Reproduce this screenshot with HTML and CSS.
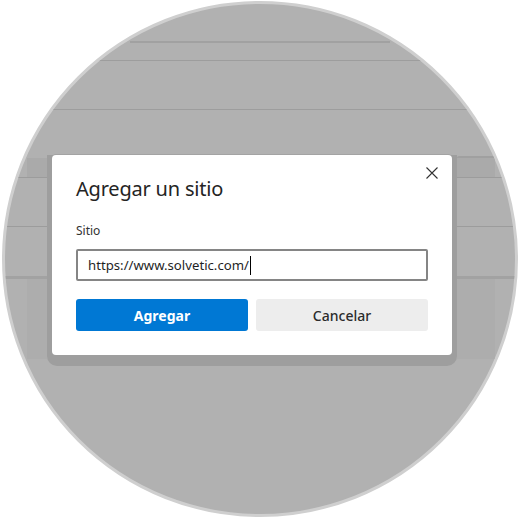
FILE: index.html
```html
<!DOCTYPE html>
<html lang="es">
<head>
<meta charset="utf-8">
<title>Agregar un sitio</title>
<link rel="stylesheet" href="styles.css">
</head>
<body>
<div class="circle">
  <div class="band"></div>
  <div class="rule rule-a"></div>
  <div class="rule rule-b"></div>
  <div class="stage">
    <div class="side side-left">
      <div class="tab"></div>
      <div class="sep"></div>
      <div class="sep sep-mid"></div>
      <div class="sep sep-thick"></div>
      <div class="tab tab-low"></div>
    </div>
    <div class="panel">
      <div class="dialog">
        <button class="close" aria-label="Cerrar">
          <svg width="12" height="12" viewBox="0 0 12 12"><path d="M0.5 0.5 L11.5 11.5 M11.5 0.5 L0.5 11.5" stroke="#333" stroke-width="1.1" fill="none"/></svg>
        </button>
        <h1 class="title">Agregar un sitio</h1>
        <div class="label">Sitio</div>
        <div class="field"><span class="value">https://www.solvetic.com/</span><span class="caret"></span></div>
        <div class="actions">
          <button class="btn btn-primary">Agregar</button>
          <button class="btn btn-secondary">Cancelar</button>
        </div>
      </div>
    </div>
    <div class="side side-right">
      <div class="tab"></div>
      <div class="sep"></div>
      <div class="sep sep-mid"></div>
      <div class="sep sep-thick"></div>
      <div class="tab tab-low"></div>
    </div>
  </div>
</div>
</body>
</html>
```

FILE: styles.css
```css
html, body {
  margin: 0;
  padding: 0;
  background: #ffffff;
}

body {
  width: 520px;
  height: 520px;
  overflow: hidden;
  font-family: "Noto Sans", "Open Sans", sans-serif;
}

.circle {
  margin: 1px 0 0 2px;
  width: 510px;
  height: 510px;
  border: 3px solid #cfcfcf;
  border-radius: 50%;
  background: #b1b1b1;
  overflow: hidden;
}

.band {
  margin: 37px 0 0 125px;
  width: 260px;
  height: 2px;
  background: #a1a1a1;
}

.rule {
  height: 1px;
  background: #9d9d9d;
}

.rule-a {
  margin-top: 17px;
}

.rule-b {
  margin-top: 48px;
}

.stage {
  margin-top: 45px;
  display: flex;
  align-items: flex-start;
}

.side {
  display: flex;
  flex-direction: column;
}

.side-left {
  width: 42px;
}

.side-right {
  flex: 1;
}

.tab {
  margin-top: 3px;
  height: 19px;
  background: #aaaaaa;
}

.side-left .tab {
  margin-left: 22px;
}

.side-right .tab {
  margin-top: 1px;
  height: 19px;
  border-top: 2px solid #a0a0a0;
  margin-right: 20px;
  border-radius: 2px 0 0 0;
}

.sep {
  height: 1px;
  background: #9c9c9c;
}

.sep-mid {
  margin-top: 48px;
}

.sep-thick {
  margin-top: 49px;
  height: 3px;
  background: #a2a2a2;
}

.side .tab-low {
  margin-top: 0;
  height: 80px;
  border-top: none;
  background: #adadad;
}

.panel {
  width: 400px;
  padding: 0 5px 11px 5px;
  background: #9e9e9e;
  border-radius: 0 0 10px 10px;
}

.dialog {
  position: relative;
  box-sizing: border-box;
  height: 200px;
  padding: 20px 24px 24px;
  background: #ffffff;
  border-radius: 4px;
  box-shadow: 0 -1px 0 #a3a3a3;
}

.close {
  position: absolute;
  top: 12px;
  right: 14px;
  width: 12px;
  height: 12px;
  padding: 0;
  border: none;
  background: transparent;
  display: block;
}

.close svg {
  display: block;
}

.title {
  margin: 0;
  font-size: 20px;
  line-height: 28px;
  font-weight: 400;
  color: #242424;
  letter-spacing: -0.2px;
}

.label {
  margin-top: 20px;
  font-size: 12px;
  line-height: 16px;
  color: #333333;
}

.field {
  margin-top: 10px;
  box-sizing: border-box;
  height: 32px;
  border: 2px solid #858585;
  border-radius: 2px;
  padding: 0 10px;
  display: flex;
  align-items: center;
  font-size: 13.2px;
  color: #1f1f1f;
}

.caret {
  display: inline-block;
  width: 1px;
  height: 19px;
  margin-left: 1px;
  background: #000000;
}

.actions {
  margin-top: 18px;
  display: flex;
  gap: 8px;
}

.btn {
  flex: 1;
  height: 32px;
  border: none;
  border-radius: 3px;
  font-family: "Noto Sans", "Open Sans", sans-serif;
  font-size: 14px;
  padding: 0;
}

.btn-primary {
  background: #0078d4;
  color: #ffffff;
  font-weight: 700;
}

.btn-secondary {
  background: #ededed;
  color: #2b2b2b;
  font-weight: 500;
}
```
